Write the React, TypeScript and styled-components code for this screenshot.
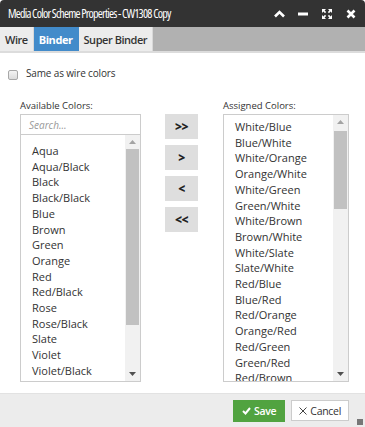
import React from "react";
import styled, { createGlobalStyle } from "styled-components";

const GlobalStyle = createGlobalStyle`
  html, body {
    margin: 0;
    padding: 0;
    background: #fff;
  }
  body {
    font-family: "Open Sans", "Liberation Sans", sans-serif;
  }
  * {
    box-sizing: border-box;
  }
`;

const available = [
  "Aqua",
  "Aqua/Black",
  "Black",
  "Black/Black",
  "Blue",
  "Brown",
  "Green",
  "Orange",
  "Red",
  "Red/Black",
  "Rose",
  "Rose/Black",
  "Slate",
  "Violet",
  "Violet/Black",
];

const assigned = [
  "White/Blue",
  "Blue/White",
  "White/Orange",
  "Orange/White",
  "White/Green",
  "Green/White",
  "White/Brown",
  "Brown/White",
  "White/Slate",
  "Slate/White",
  "Red/Blue",
  "Blue/Red",
  "Red/Orange",
  "Orange/Red",
  "Red/Green",
  "Green/Red",
  "Red/Brown",
];

const Dialog = styled.div`
  width: 365px;
  height: 427px;
  display: flex;
  flex-direction: column;
  overflow: hidden;
`;

const TitleBar = styled.div`
  height: 27px;
  background: #333;
  border-radius: 4px 4px 0 0;
  display: flex;
  align-items: center;
  padding: 0 2px 0 8px;
  color: #fff;
`;

const Title = styled.div`
  flex: 1;
  font-size: 12px;
  font-stretch: 75%;
  letter-spacing: -0.75px;
  white-space: nowrap;
`;

const TitleIcons = styled.div`
  display: flex;
  align-items: center;
`;

const IconBtn = styled.div`
  width: 24px;
  height: 20px;
  display: flex;
  align-items: center;
  justify-content: center;
`;

const TabBar = styled.div`
  height: 26px;
  background: #b1b1b1;
  display: flex;
  border-bottom: 2px solid #dcdcdc;
`;

const Tab = styled.div<{ $active?: boolean }>`
  padding: 0 5px;
  display: flex;
  align-items: center;
  font-size: 11px;
  letter-spacing: -0.45px;
  background: ${(p) => (p.$active ? "#428bca" : "#ececec")};
  color: ${(p) => (p.$active ? "#fff" : "#333")};
  border-right: 1px solid ${(p) => (p.$active ? "#428bca" : "#d8d8d8")};
  font-weight: ${(p) => (p.$active ? 700 : 600)};
`;

const Body = styled.div`
  flex: 1;
  padding: 14px 0 0 8px;
  display: flex;
  flex-direction: column;
  border-bottom: 1px solid #e2e2e2;
`;

const CheckRow = styled.label`
  display: flex;
  align-items: center;
  font-size: 10px;
  letter-spacing: -0.15px;
  color: #333;
  height: 12px;
`;

const CheckBox = styled.span`
  width: 10px;
  height: 10px;
  border: 1px solid #a8a8a8;
  border-radius: 2px;
  background: linear-gradient(#f4f4f4, #dcdcdc);
  margin-right: 8px;
  margin-top: 3px;
`;

const Columns = styled.div`
  display: flex;
  margin-top: 21px;
  padding-left: 12px;
`;

const Column = styled.div<{ $w: number }>`
  width: ${(p) => p.$w}px;
  display: flex;
  flex-direction: column;
`;

const Label = styled.div`
  font-size: 9.5px;
  color: #333;
  height: 12px;
  line-height: 12px;
  margin-bottom: 2px;
`;

const Search = styled.div`
  height: 20px;
  border: 1px solid #ccc;
  border-bottom: none;
  font-size: 10px;
  font-style: italic;
  color: #999;
  padding-left: 8px;
  display: flex;
  align-items: center;
`;

const ListBox = styled.div<{ $h: number }>`
  height: ${(p) => p.$h}px;
  border: 1px solid #ccc;
  display: flex;
  overflow: hidden;
`;

const Items = styled.div<{ $top: number }>`
  flex: 1;
  padding: ${(p) => p.$top}px 0 0 11px;
  overflow: hidden;
`;

const Item = styled.div`
  font-size: 11px;
  line-height: 15.7px;
  color: #333;
  white-space: nowrap;
`;

const ScrollTrack = styled.div`
  width: 15px;
  background: #f1f1f1;
  display: flex;
  flex-direction: column;
  align-items: center;
`;

const Arrow = styled.div`
  height: 14px;
  display: flex;
  align-items: center;
  justify-content: center;
`;

const Thumb = styled.div<{ $h: number; $gap: number }>`
  width: 13px;
  margin-top: ${(p) => p.$gap}px;
  height: ${(p) => p.$h}px;
  background: #c1c1c1;
`;

const Spacer = styled.div`
  flex: 1;
`;

const Movers = styled.div`
  width: 82px;
  display: flex;
  flex-direction: column;
  padding: 14px 0 0 24px;
  gap: 6px;
`;

const MoveBtn = styled.div`
  width: 33px;
  height: 25px;
  background: #dedede;
  display: flex;
  align-items: center;
  justify-content: center;
  font-size: 12px;
  font-weight: 800;
  color: #222;
  letter-spacing: -0.5px;
`;

const Footer = styled.div`
  height: 33px;
  background: #ececec;
  display: flex;
  align-items: center;
  justify-content: flex-end;
  padding-right: 16px;
  gap: 6px;
  position: relative;
`;

const Button = styled.div<{ $primary?: boolean }>`
  height: ${(p) => (p.$primary ? "22px" : "21px")};
  padding: 0 ${(p) => (p.$primary ? "8px" : "7px")};
  display: flex;
  align-items: center;
  gap: 3px;
  font-size: 10.5px;
  letter-spacing: -0.3px;
  background: ${(p) => (p.$primary ? "#51a340" : "#fff")};
  color: ${(p) => (p.$primary ? "#fff" : "#333")};
  border: 1px solid ${(p) => (p.$primary ? "#51a340" : "#ccc")};
  font-weight: ${(p) => (p.$primary ? 600 : 400)};
`;

const Grip = styled.div`
  position: absolute;
  right: 2px;
  bottom: 2px;
  width: 6px;
  height: 6px;
  background-image: radial-gradient(#777 0.8px, transparent 0.9px);
  background-size: 2px 2px;
`;

function ScrollBar({ thumb, gap }: { thumb: number; gap: number }) {
  return (
    <ScrollTrack>
      <Arrow>
        <svg width="7" height="4" viewBox="0 0 7 4">
          <path d="M0 4 L3.5 0 L7 4 Z" fill="#a3a3a3" />
        </svg>
      </Arrow>
      <Thumb $h={thumb} $gap={gap} />
      <Spacer />
      <Arrow>
        <svg width="7" height="4" viewBox="0 0 7 4">
          <path d="M0 0 L7 0 L3.5 4 Z" fill="#505050" />
        </svg>
      </Arrow>
    </ScrollTrack>
  );
}

export default function App() {
  return (
    <>
      <GlobalStyle />
      <Dialog>
        <TitleBar>
          <Title>Media Color Scheme Properties - CW1308 Copy</Title>
          <TitleIcons>
            <IconBtn>
              <svg width="11" height="8" viewBox="0 0 11 8">
                <path d="M1 6.5 L5.5 2 L10 6.5" stroke="#fff" strokeWidth="2.6" fill="none" />
              </svg>
            </IconBtn>
            <IconBtn>
              <svg width="10" height="4" viewBox="0 0 10 4">
                <rect x="0" y="0.5" width="10" height="3" fill="#fff" />
              </svg>
            </IconBtn>
            <IconBtn>
              <svg width="10" height="10" viewBox="0 0 10 10" fill="#fff">
                <path d="M0 0 H4 L2.6 1.4 L4.2 3 L3 4.2 L1.4 2.6 L0 4 Z" />
                <path d="M10 0 V4 L8.6 2.6 L7 4.2 L5.8 3 L7.4 1.4 L6 0 Z" />
                <path d="M0 10 V6 L1.4 7.4 L3 5.8 L4.2 7 L2.6 8.6 L4 10 Z" />
                <path d="M10 10 H6 L7.4 8.6 L5.8 7 L7 5.8 L8.6 7.4 L10 6 Z" />
              </svg>
            </IconBtn>
            <IconBtn>
              <svg width="10" height="10" viewBox="0 0 10 10">
                <path d="M1.5 1.5 L8.5 8.5 M8.5 1.5 L1.5 8.5" stroke="#fff" strokeWidth="2.6" />
              </svg>
            </IconBtn>
          </TitleIcons>
        </TitleBar>
        <TabBar>
          <Tab>Wire</Tab>
          <Tab $active>Binder</Tab>
          <Tab>Super Binder</Tab>
        </TabBar>
        <Body>
          <CheckRow>
            <CheckBox />
            Same as wire colors
          </CheckRow>
          <Columns>
            <Column $w={121}>
              <Label>Available Colors:</Label>
              <Search>Search...</Search>
              <ListBox $h={248}>
                <Items $top={8}>
                  {available.map((c) => (
                    <Item key={c}>{c}</Item>
                  ))}
                </Items>
                <ScrollBar thumb={176} gap={0} />
              </ListBox>
            </Column>
            <Movers>
              <MoveBtn>&gt;&gt;</MoveBtn>
              <MoveBtn>&gt;</MoveBtn>
              <MoveBtn>&lt;</MoveBtn>
              <MoveBtn>&lt;&lt;</MoveBtn>
            </Movers>
            <Column $w={126}>
              <Label>Assigned Colors:</Label>
              <ListBox $h={268}>
                <Items $top={4}>
                  {assigned.map((c) => (
                    <Item key={c}>{c}</Item>
                  ))}
                </Items>
                <ScrollBar thumb={78} gap={2} />
              </ListBox>
            </Column>
          </Columns>
        </Body>
        <Footer>
          <Button $primary>
            <svg width="9" height="8" viewBox="0 0 9 8">
              <path d="M1 4 L3.5 6.5 L8 1" stroke="#fff" strokeWidth="2" fill="none" />
            </svg>
            Save
          </Button>
          <Button>
            <svg width="8" height="8" viewBox="0 0 8 8">
              <path d="M0.5 0.5 L7.5 7.5 M7.5 0.5 L0.5 7.5" stroke="#444" strokeWidth="1" />
            </svg>
            Cancel
          </Button>
          <Grip />
        </Footer>
      </Dialog>
    </>
  );
}
